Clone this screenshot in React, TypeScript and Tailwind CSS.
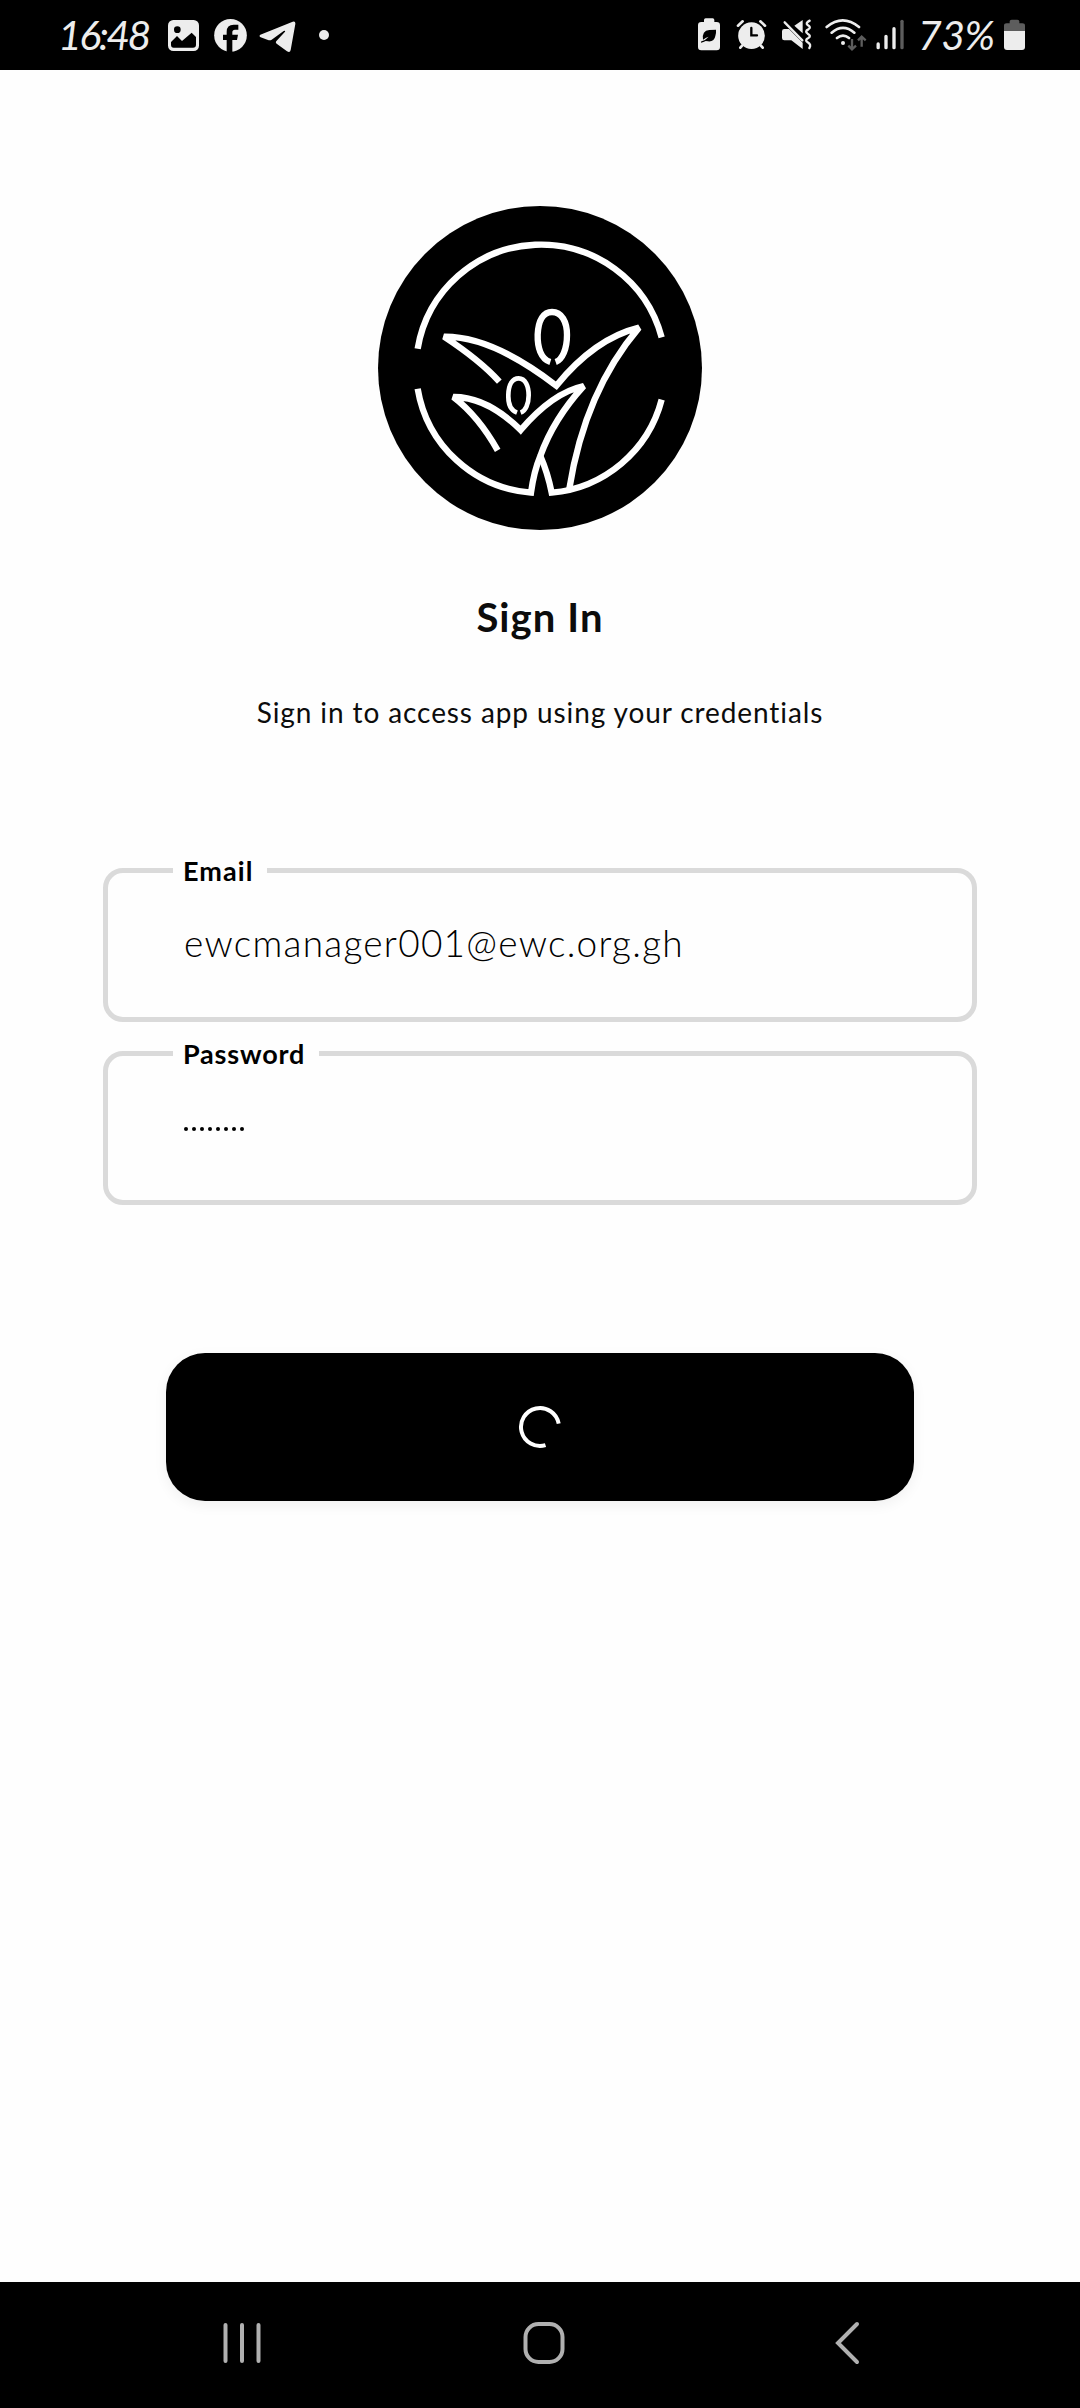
import type { ReactNode } from "react";

const ink = "#ededed";

function StatusGlyph({ x, w, className, children }: { x: number; w: number; className: string; children: ReactNode }) {
  return (
    <svg viewBox={`${x} 0 ${w} 210`} width={w / 3} height={70} className={`shrink-0 ${className}`} fill={ink}>
      {children}
    </svg>
  );
}

function StatusBar() {
  return (
    <header className="flex h-[70px] shrink-0 items-center bg-black pl-[58px] text-[#ededed]">
      <span className="w-[110px] whitespace-nowrap font-['Lato'] text-[41px] leading-[70px] italic tracking-[-2.5px]">16:48</span>
      <StatusGlyph x={384} w={93} className="">
        <rect x="384" y="60" width="93" height="93" rx="16" />
        <circle cx="412" cy="89" r="10" fill="#000" />
        <path d="M393 126 L411 108 L426 123 L455 98 L468 111 V134 Q468 143 459 143 H401 Q393 143 393 134Z" fill="#000" />
      </StatusGlyph>
      <StatusGlyph x={522} w={99} className="ml-[15px]">
        <circle cx="571.5" cy="106" r="49" />
        <path d="M560 156 V120 H549 V104 H560 V95 Q560 74 581 74 H595 V89 H585 Q577 89 577 97 V104 H594 L591 120 H577 V156Z" fill="#000" />
      </StatusGlyph>
      <StatusGlyph x={657} w={111} className="ml-3">
        <path d="M661 104 L758 65 Q767 62 766 72 L752 150 Q750 160 741 154 L710 131 Q705 127 710 122 L735 95 Q737 90 731 93 L695 119 Q690 122 684 120 L662 112 Q656 108 661 104Z" />
      </StatusGlyph>
      <StatusGlyph x={837} w={30} className="ml-[23px]">
        <circle cx="852" cy="105" r="15" />
      </StatusGlyph>

      <StatusGlyph x={51} w={72} className="ml-[368px]">
        <path d="M72 66 V60 Q72 55 77 55 H98 Q103 55 103 60 V66 H110 Q120 66 120 76 V141 Q120 151 110 151 H64 Q54 151 54 141 V76 Q54 66 64 66Z" />
        <path d="M69 119 Q65 92 88 90 L108 89 Q109 98 106 108 Q103 126 84 124 L77 123 Q71 127 63 128 Q62 125 65 124 Q75 122 86 110 Q79 111 69 119Z" fill="#000" />
      </StatusGlyph>
      <StatusGlyph x={168} w={93} className="ml-[15px]">
        <circle cx="214.500" cy="107" r="40" />
        <path d="M174 77 L188 64 M255 77 L241 64 M187 136 L181 143 M242 136 L248 143" stroke={ink} strokeWidth="8" strokeLinecap="round" />
        <path d="M214 84 V106 H231" fill="none" stroke="#000" strokeWidth="7" strokeLinecap="round" />
      </StatusGlyph>
      <StatusGlyph x={303} w={93} className="ml-3.5">
        <path d="M306 94 Q306 87 313 87 H327 L368 128 V147 L334 121 H313 Q306 121 306 114Z M343 77 L368 60 V100Z" />
        <path d="M314 67 L367 121" stroke={ink} strokeWidth="7" strokeLinecap="round" />
        <path d="M389 62 Q375 69 383 75 Q395 82 385 88 Q373 94 383 101 Q395 108 385 114 Q373 120 383 127 Q395 134 388 144" fill="none" stroke={ink} strokeWidth="7" strokeLinecap="round" />
      </StatusGlyph>
      <StatusGlyph x={435} w={126} className="ml-[13px]">
        <path d="M440 81 Q488 41 537 81 M455 98 Q489 69 523 98 M471 114 Q489 100 507 114" fill="none" stroke={ink} strokeWidth="8" strokeLinecap="round" />
        <circle cx="489" cy="129" r="6" />
        <path d="M516 117 V148 M505 137 L516 148 L528 137 M545 140 V110 M534 121 L545 110 L557 121" fill="none" stroke="#5d5d5d" strokeWidth="7" />
      </StatusGlyph>
      <StatusGlyph x={585} w={87} className="ml-2">
        <path d="M594.500 132 V143 M618 109 V143 M642 86 V143" stroke={ink} strokeWidth="10" strokeLinecap="round" />
        <path d="M666 64 V143" stroke="#5d5d5d" strokeWidth="10" strokeLinecap="round" />
      </StatusGlyph>
      <span className="ml-[14px] w-[85px] whitespace-nowrap font-['Lato'] text-[41px] leading-[70px] italic tracking-[-0.5px]">73%</span>
      <StatusGlyph x={969} w={69} className="">
        <path d="M972 95 V77 Q972 70 980 70 H989 V64 Q989 59 995 59 H1012 Q1018 59 1018 64 V70 H1027 Q1035 70 1035 77 V95Z" fill="#5d5d5d" />
        <path d="M972 93 H1035 V141 Q1035 150 1026 150 H981 Q972 150 972 141Z" />
      </StatusGlyph>
    </header>
  );
}

function Logo() {
  return (
    <svg viewBox="24 30 972 972" className="mt-[136px] size-[324px] shrink-0" fill="none" stroke="#fff">
      <circle cx="510" cy="516" r="486" fill="#000" stroke="none" />
      <g strokeWidth="19" strokeMiterlimit="2">
        <path d="M143 458 A375 375 0 0 1 875 424" />
        <path d="M143 578 A375 375 0 0 0 483 890 Q492 825 511 780 Q550 670 641 570 Q548 590 452 702 Q350 602 250 603 Q325 660 383 763" />
        <path d="M875 611 A375 375 0 0 1 545 890 Q533 830 511 780" />
        <path d="M388 557 Q330 493 222 422 Q365 420 559 569 Q675 427 807 395 Q645 585 598 878" />
        <path d="M541 498 C512 489 502 453 503 416 C505 372 521 348 546 348 C575 348 591 377 591 417 C591 459 577 491 557 498" />
        <path d="M441 650 C422 643 414 621 415 596 C416 564 428 547 446 547 C466 547 476 570 476 598 C476 625 466 645 452 650" strokeWidth="14" />
      </g>
    </svg>
  );
}

function Field({ label, labelClass, className, children }: { label: string; labelClass: string; className: string; children: ReactNode }) {
  return (
    <div className={`relative w-[874px] shrink-0 rounded-[20px] border-5 border-[#dadada] pl-[76px] ${className}`}>
      <label className={`absolute -top-5 left-[65px] h-9 bg-[#fefefe] pl-2.5 text-[27px] leading-9 font-bold whitespace-nowrap ${labelClass}`}>{label}</label>
      {children}
    </div>
  );
}

function NavBar() {
  return (
    <nav className="flex h-[126px] shrink-0 items-center bg-black pb-1 pl-[222px] text-[#b0b0b0]">
      <svg width="40" height="44" viewBox="0 0 40 44" stroke="currentColor" strokeWidth="4" strokeLinecap="round">
        <path d="M3.500 4 V40 M20 4 V40 M36.500 4 V40" />
      </svg>
      <svg width="44" height="44" viewBox="0 0 44 44" className="ml-[260px]" fill="none" stroke="currentColor" strokeWidth="4">
        <rect x="3.500" y="3" width="37" height="38" rx="13" />
      </svg>
      <svg width="28" height="44" viewBox="0 0 28 44" className="ml-[267px]" fill="none" stroke="currentColor" strokeWidth="4" strokeLinecap="round">
        <path d="M24 3 L5 22 L24 41" />
      </svg>
    </nav>
  );
}

export default function App() {
  return (
    <div className="flex h-[2408px] w-[1080px] flex-col bg-[#fefefe] font-['Lato',sans-serif] text-black">
      <StatusBar />
      <main className="flex flex-1 flex-col items-center">
        <Logo />
        <h1 className="mt-[61px] text-[40px] leading-[52px] font-bold tracking-[1.1px] whitespace-nowrap text-[#0c0c0c]">Sign In</h1>
        <p className="mt-[49px] text-[28px] leading-10 tracking-[0.9px] whitespace-nowrap text-[#0c0c0c]">Sign in to access app using your credentials</p>
        <Field label="Email" labelClass="w-[94px] tracking-[1.1px]" className="mt-[136px] h-[154px]">
          <div className="pt-[44px] text-[37px] leading-[52px] font-light tracking-[1.25px] whitespace-nowrap">ewcmanager001@ewc.org.gh</div>
        </Field>
        <Field label="Password" labelClass="w-[146px] tracking-[0.8px]" className="mt-[29px] h-[154px]">
          <div className="flex gap-[4px] pt-[71px]" aria-label="Password entered">
            {Array.from({ length: 8 }, (_, i) => (
              <span key={i} className="size-1 rounded-full bg-black" />
            ))}
          </div>
        </Field>
        <button className="mt-[148px] flex h-[148px] w-[748px] shrink-0 items-center justify-center rounded-[39px] bg-black shadow-[0_4px_14px_rgba(0,0,0,0.06)]" aria-label="Signing in">
          <svg width="44" height="44" viewBox="0 0 44 44" fill="none" stroke="#fff" strokeWidth="4">
            <path d="M40.700 18.700 A19 19 0 1 0 27.500 40.200" />
          </svg>
        </button>
      </main>
      <NavBar />
    </div>
  );
}
